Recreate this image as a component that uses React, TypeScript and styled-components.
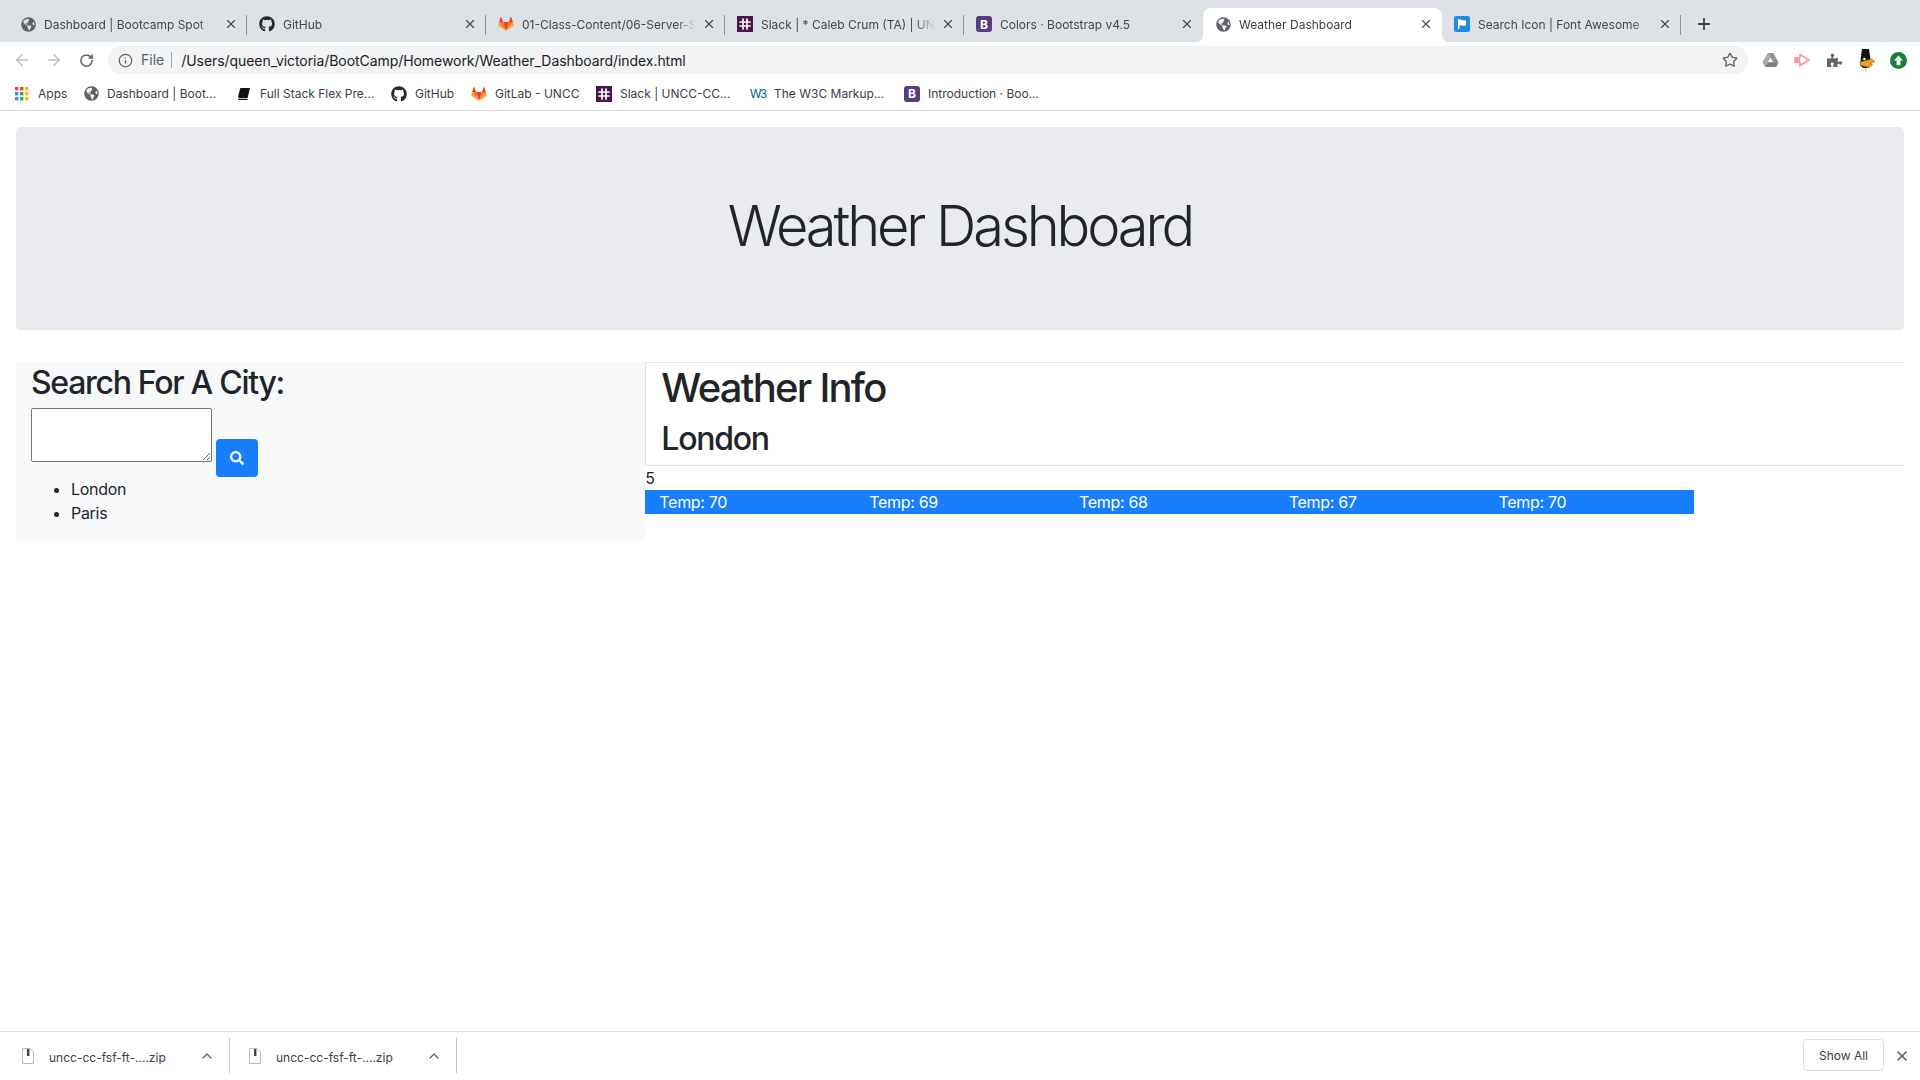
import React from "react";
import styled, { createGlobalStyle } from "styled-components";
import { FaGithub, FaGlobeAmericas, FaPuzzlePiece, FaSearch } from "react-icons/fa";
import { ArrowLeft, ArrowRight, ChevronUp, Info, Plus, RotateCw, Star, X } from "lucide-react";

const GlobalStyle = createGlobalStyle`
  html, body {
    margin: 0;
    padding: 0;
    height: 100%;
    background: #fff;
    font-family: Inter, "Liberation Sans", sans-serif;
    color: #212529;
  }
  * { box-sizing: border-box; }
`;

const GitlabIcon = () => (
  <svg width="16" height="16" viewBox="0 0 24 24">
    <path d="M12 22 L16.4 9 H7.6 Z" fill="#e24329" />
    <path d="M12 22 L7.6 9 H1.6 Z" fill="#fc6d26" />
    <path d="M12 22 L16.4 9 H22.4 Z" fill="#fc6d26" />
    <path d="M1.6 9 L0.5 13.6 Q0.4 14.4 1 14.9 L12 22 Z" fill="#fca326" />
    <path d="M22.4 9 L23.5 13.6 Q23.6 14.4 23 14.9 L12 22 Z" fill="#fca326" />
    <path d="M1.6 9 H7.6 L5 1.4 Q4.6 .8 4.2 1.4 Z" fill="#e24329" />
    <path d="M22.4 9 H16.4 L19 1.4 Q19.4 .8 19.8 1.4 Z" fill="#e24329" />
  </svg>
);

const SlackIcon = () => (
  <svg width="16" height="16" viewBox="0 0 16 16">
    <rect width="16" height="16" fill="#4a154b" />
    <path d="M6 3v10M10 3v10M3 6h10M3 10h10" stroke="#fff" strokeWidth="1.7" strokeLinecap="round" />
  </svg>
);

const FlagIcon = () => (
  <svg width="16" height="16" viewBox="0 0 16 16">
    <rect width="16" height="16" rx="2" fill="#228ae6" />
    <path d="M4 3v10h1.4V9.6C7 8.8 8.6 10.4 12 9.6V4.2C9 5 7 3.4 5.4 4V3Z" fill="#fff" />
  </svg>
);

const BookIcon = () => (
  <svg width="14" height="14" viewBox="0 0 14 14">
    <path d="M3.4 1H13L10.6 11H2.4Q1 11 1 9.6Z M1 11.4Q1 13 2.6 13H10.4L10.8 11.8H2.4Z" fill="#111" />
  </svg>
);

const AppsIcon = () => {
  const colors = ["#ea4335", "#ea4335", "#fbbc04", "#4285f4", "#34a853", "#fbbc04", "#4285f4", "#34a853", "#fbbc04"];
  return (
    <svg width="14" height="14" viewBox="0 0 14 14">
      {colors.map((c, i) => (
        <rect key={i} x={(i % 3) * 5} y={Math.floor(i / 3) * 5} width="3.4" height="3.4" fill={c} />
      ))}
    </svg>
  );
};

const DriveIcon = () => (
  <svg width="17" height="16" viewBox="0 0 17 16">
    <path d="M5.8 1h5.4l5.4 9.2H11.2z" fill="#8f9296" />
    <path d="M5.8 1 .4 10.2 3 15l5.5-9.4z" fill="#a9acaf" />
    <path d="M3 15h11.2l2.4-4.8H5.8z" fill="#797c80" />
  </svg>
);

const ArrowExtIcon = () => (
  <svg width="18" height="16" viewBox="0 0 18 16">
    <rect x="1" y="5" width="6" height="6" fill="#ff9aa2" />
    <path d="M7 2.4 16 8l-9 5.6V10" fill="none" stroke="#ff9aa2" strokeWidth="1.8" />
    <path d="M7 6V2.4" stroke="#ff9aa2" strokeWidth="1.8" />
  </svg>
);

const DuckIcon = () => (
  <svg width="18" height="23" viewBox="0 0 18 23">
    <path d="M5 0h7l1.4 10H3.6z" fill="#111" />
    <path d="M4 9h9l1 5-2 5H6l-3-3z" fill="#222" />
    <path d="M3 13l12-3 3 2.6-5 1.8 2.6 1.2-4 3-8-2.4z" fill="#f0a028" stroke="#7a4a10" strokeWidth=".5" />
    <circle cx="7.4" cy="10" r="1.2" fill="#fff" />
    <path d="M8 19v3.4h1.6V19z" fill="#d0d0d0" />
  </svg>
);

const UploadBadge = () => (
  <svg width="17" height="17" viewBox="0 0 18 18">
    <circle cx="9" cy="9" r="9" fill="#188038" />
    <path d="M9 3.6 13.6 9H11v5H7V9H4.4z" fill="#fff" />
  </svg>
);

const ZipIcon = () => (
  <svg width="12" height="16" viewBox="0 0 12 16">
    <path d="M.5.5H8L11.5 4V15.5H.5Z" fill="#fff" stroke="#b8babc" />
    <rect x="5" y="1" width="2.4" height="7" fill="#444" />
  </svg>
);

function BootstrapBadge() {
  return <BBadge>B</BBadge>;
}

function W3Icon() {
  return <W3Badge>W3</W3Badge>;
}

const tabs = [
  { title: "Dashboard | Bootcamp Spot", icon: <FaGlobeAmericas size={15} color="#5f6368" />, sep: true },
  { title: "GitHub", icon: <FaGithub size={16} color="#24292e" />, sep: true },
  { title: "01-Class-Content/06-Server-Side-APIs", icon: <GitlabIcon />, sep: true },
  { title: "Slack | * Caleb Crum (TA) | UNCC-CC", icon: <SlackIcon />, sep: true },
  { title: "Colors · Bootstrap v4.5", icon: <BootstrapBadge />, sep: false },
  { title: "Weather Dashboard", icon: <FaGlobeAmericas size={15} color="#5f6368" />, sep: false, active: true },
  { title: "Search Icon | Font Awesome", icon: <FlagIcon />, sep: true },
];

const bookmarks = [
  { title: "Apps", icon: <AppsIcon />, width: 69 },
  { title: "Dashboard | Boot...", icon: <FaGlobeAmericas size={15} color="#5f6368" />, width: 153 },
  { title: "Full Stack Flex Pre...", icon: <BookIcon />, width: 155 },
  { title: "GitHub", icon: <FaGithub size={16} color="#24292e" />, width: 80 },
  { title: "GitLab - UNCC", icon: <GitlabIcon />, width: 125 },
  { title: "Slack | UNCC-CC...", icon: <SlackIcon />, width: 154 },
  { title: "The W3C Markup...", icon: <W3Icon />, width: 154 },
  { title: "Introduction · Boo...", icon: <BootstrapBadge />, width: 160 },
];

const temps = [70, 69, 68, 67, 70];
const cities = ["London", "Paris"];

export default function App() {
  return (
    <Page>
      <GlobalStyle />
      <TabStrip>
        {tabs.map((tab) => (
          <Tab key={tab.title} $active={tab.active} $sep={tab.sep}>
            <IconSlot>{tab.icon}</IconSlot>
            <TabTitle>{tab.title}</TabTitle>
            <X size={14} color="#45474a" strokeWidth={2} />
          </Tab>
        ))}
        <NewTab>
          <Plus size={18} color="#3c4043" strokeWidth={2.4} />
        </NewTab>
      </TabStrip>

      <Toolbar>
        <NavButton>
          <ArrowLeft size={18} color="#bcbfc3" />
        </NavButton>
        <NavButton>
          <ArrowRight size={18} color="#bcbfc3" />
        </NavButton>
        <NavButton>
          <RotateCw size={15} color="#5f6368" strokeWidth={2.4} />
        </NavButton>
        <UrlBar>
          <Info size={15} color="#5f6368" />
          <Scheme>File</Scheme>
          <UrlText>/Users/queen_victoria/BootCamp/Homework/Weather_Dashboard/index.html</UrlText>
          <Star size={16} color="#5f6368" />
        </UrlBar>
        <Extensions>
          <NavButton>
            <DriveIcon />
          </NavButton>
          <NavButton>
            <ArrowExtIcon />
          </NavButton>
          <NavButton>
            <FaPuzzlePiece size={15} color="#5f6368" />
          </NavButton>
          <NavButton>
            <DuckIcon />
          </NavButton>
          <NavButton>
            <UploadBadge />
          </NavButton>
        </Extensions>
      </Toolbar>

      <BookmarkBar>
        {bookmarks.map((b) => (
          <Bookmark key={b.title} $width={b.width}>
            <IconSlot>{b.icon}</IconSlot>
            <span>{b.title}</span>
          </Bookmark>
        ))}
      </BookmarkBar>

      <Content>
        <Jumbotron>
          <Display>Weather Dashboard</Display>
        </Jumbotron>

        <Row>
          <SearchPanel>
            <SearchTitle>Search For A City:</SearchTitle>
            <SearchRow>
              <CityInput />
              <SearchButton aria-label="search">
                <FaSearch size={14} color="#fff" />
              </SearchButton>
            </SearchRow>
            <CityList>
              {cities.map((c) => (
                <li key={c}>{c}</li>
              ))}
            </CityList>
          </SearchPanel>

          <InfoPanel>
            <InfoHeader>
              <InfoTitle>Weather Info</InfoTitle>
              <CityName>London</CityName>
            </InfoHeader>
            <Count>5</Count>
            <Forecast>
              {temps.map((t, i) => (
                <ForecastCol key={i}>Temp: {t}</ForecastCol>
              ))}
            </Forecast>
          </InfoPanel>
        </Row>
      </Content>

      <DownloadBar>
        {[0, 1].map((i) => (
          <DownloadItem key={i}>
            <ZipIcon />
            <FileName>uncc-cc-fsf-ft-....zip</FileName>
            <ChevronUp size={16} color="#5f6368" />
          </DownloadItem>
        ))}
        <ShowAll>Show All</ShowAll>
        <X size={16} color="#5f6368" strokeWidth={2.4} />
      </DownloadBar>
    </Page>
  );
}

const Page = styled.div`
  display: flex;
  flex-direction: column;
  height: 100vh;
  overflow: hidden;
`;

const TabStrip = styled.div`
  display: flex;
  flex: none;
  height: 42px;
  padding: 8px 0 0 8px;
  background: #dee1e6;
`;

const Tab = styled.div<{ $active?: boolean; $sep?: boolean }>`
  position: relative;
  display: flex;
  align-items: center;
  flex: none;
  width: 239px;
  height: 34px;
  padding: 0 9px 2px 12px;
  font-size: 12px;
  color: ${(p) => (p.$active ? "#3c4043" : "#45474a")};
  background: ${(p) => (p.$active ? "#fff" : "transparent")};
  border-radius: 8px 8px 0 0;

  &::after {
    content: "";
    display: ${(p) => (p.$sep ? "block" : "none")};
    position: absolute;
    right: 0;
    top: 7px;
    height: 20px;
    width: 1px;
    background: #8f9296;
  }

  &::before {
    content: "";
    display: ${(p) => (p.$active ? "block" : "none")};
    position: absolute;
    left: -6px;
    right: -6px;
    bottom: 0;
    height: 6px;
    background:
      radial-gradient(circle at 0 0, #dee1e6 5.5px, #fff 6px) left bottom / 6px 6px no-repeat,
      radial-gradient(circle at 100% 0, #dee1e6 5.5px, #fff 6px) right bottom / 6px 6px no-repeat;
  }
`;

const IconSlot = styled.span`
  display: inline-flex;
  align-items: center;
  justify-content: center;
  flex: none;
  width: 16px;
  height: 16px;
`;

const TabTitle = styled.span`
  flex: 1;
  min-width: 0;
  margin: 0 6px 0 8px;
  white-space: nowrap;
  overflow: hidden;
  -webkit-mask-image: linear-gradient(to left, transparent 0, #000 20px);
  mask-image: linear-gradient(to left, transparent 0, #000 20px);
`;

const NewTab = styled.div`
  display: flex;
  align-items: center;
  justify-content: center;
  width: 46px;
  height: 34px;
  padding-bottom: 2px;
`;

const BBadge = styled.span`
  display: inline-flex;
  align-items: center;
  justify-content: center;
  width: 16px;
  height: 16px;
  border-radius: 3px;
  background: #563d7c;
  color: #fff;
  font-size: 12px;
  font-weight: 700;
`;

const W3Badge = styled.span`
  font-family: "Liberation Sans", sans-serif;
  font-size: 12px;
  letter-spacing: -1px;
  color: #005a9c;
`;

const Toolbar = styled.div`
  display: flex;
  align-items: center;
  flex: none;
  height: 34px;
  padding: 2px 6px 0;
  background: #fff;
`;

const NavButton = styled.div`
  display: flex;
  align-items: center;
  justify-content: center;
  flex: none;
  width: 32px;
  height: 28px;
`;

const UrlBar = styled.div`
  display: flex;
  align-items: center;
  flex: 1;
  height: 28px;
  margin: 0 6px;
  padding: 0 10px;
  border-radius: 14px;
  background: #f1f3f4;
`;

const Scheme = styled.span`
  margin-left: 8px;
  padding-right: 7px;
  border-right: 1px solid #a8abae;
  font-size: 14px;
  line-height: 16px;
  color: #5f6368;
`;

const UrlText = styled.span`
  flex: 1;
  margin-left: 9px;
  font-size: 14px;
  letter-spacing: -0.06px;
  color: #202124;
`;

const Extensions = styled.div`
  display: flex;
  flex: none;
`;

const BookmarkBar = styled.div`
  display: flex;
  align-items: center;
  flex: none;
  height: 35px;
  padding: 1px 0 0 14px;
  background: #fff;
  border-bottom: 1px solid #dadce0;
`;

const Bookmark = styled.div<{ $width: number }>`
  display: flex;
  align-items: center;
  gap: 8px;
  flex: none;
  width: ${(p) => p.$width}px;
  font-size: 12px;
  color: #3c4043;
  white-space: nowrap;
`;

const Content = styled.main`
  flex: 1;
  min-height: 0;
  padding: 16px 16px 0;
  font-size: 16px;
  line-height: 1.5;
  letter-spacing: -0.3px;
`;

const Jumbotron = styled.section`
  padding: 64px 32px;
  margin-bottom: 32px;
  border-radius: 4.8px;
  background: #e9ebef;
`;

const Display = styled.h1`
  margin: 0 0 6px;
  padding-top: 2px;
  font-size: 56px;
  font-weight: 300;
  line-height: 1.2;
  letter-spacing: -3.1px;
  text-align: center;
`;

const Row = styled.div`
  display: grid;
  grid-template-columns: 1fr 2fr;
  align-items: start;
`;

const SearchPanel = styled.aside`
  padding: 0 15px;
  background: #f8f9fb;
`;

const SearchTitle = styled.h2`
  margin: 0 0 5px;
  padding-top: 2px;
  font-size: 32px;
  font-weight: 500;
  line-height: 1.2;
  letter-spacing: -1.3px;
`;

const SearchRow = styled.div`
  display: flex;
  align-items: flex-start;
  gap: 4px;
`;

const CityInput = styled.textarea`
  display: block;
  width: 181px;
  height: 54px;
  margin: 0;
  padding: 2px;
  border: 1px solid #767676;
  border-radius: 2px;
  background: #fff;
`;

const SearchButton = styled.button`
  display: flex;
  align-items: center;
  justify-content: center;
  width: 42px;
  height: 38px;
  margin-top: 31px;
  padding: 0;
  border: 0;
  border-radius: 4px;
  background: #177ffe;
`;

const CityList = styled.ul`
  margin: 0 0 16px;
  padding-left: 40px;
`;

const InfoPanel = styled.div``;

const InfoHeader = styled.header`
  padding-left: 15px;
  border: 1px solid #dfe1e3;
  border-right: 0;
`;

const InfoTitle = styled.h1`
  margin: 0 0 7px;
  padding-top: 1px;
  font-size: 40px;
  font-weight: 500;
  line-height: 1.2;
  letter-spacing: -1.75px;
`;

const CityName = styled.h2`
  margin: 0 0 6.4px;
  padding-top: 1px;
  font-size: 32px;
  font-weight: 500;
  line-height: 1.2;
  letter-spacing: -1.25px;
`;

const Count = styled.div``;

const Forecast = styled.div`
  display: flex;
  width: 1049px;
  background: #177ffe;
  color: #fff;
`;

const ForecastCol = styled.div`
  flex: 0 0 20%;
  padding: 0 14px;
`;

const DownloadBar = styled.footer`
  display: flex;
  align-items: center;
  flex: none;
  height: 49px;
  padding: 0 10px 0 3px;
  border-top: 1px solid #dadce0;
  background: #fff;
`;

const DownloadItem = styled.div`
  display: flex;
  align-items: center;
  flex: none;
  width: 227px;
  height: 35px;
  margin-bottom: 1px;
  padding: 0 14px 0 19px;
  border-right: 1px solid #c4c6c9;
`;

const FileName = styled.span`
  flex: 1;
  margin-left: 15px;
  padding-top: 3px;
  font-size: 12px;
  color: #3c4043;
`;

const ShowAll = styled.button`
  width: 81px;
  height: 32px;
  margin: 0 10px 2px auto;
  padding: 0;
  border: 1px solid #dadce0;
  border-radius: 4px;
  background: #fff;
  font-family: inherit;
  font-size: 12px;
  color: #3c4043;
`;
